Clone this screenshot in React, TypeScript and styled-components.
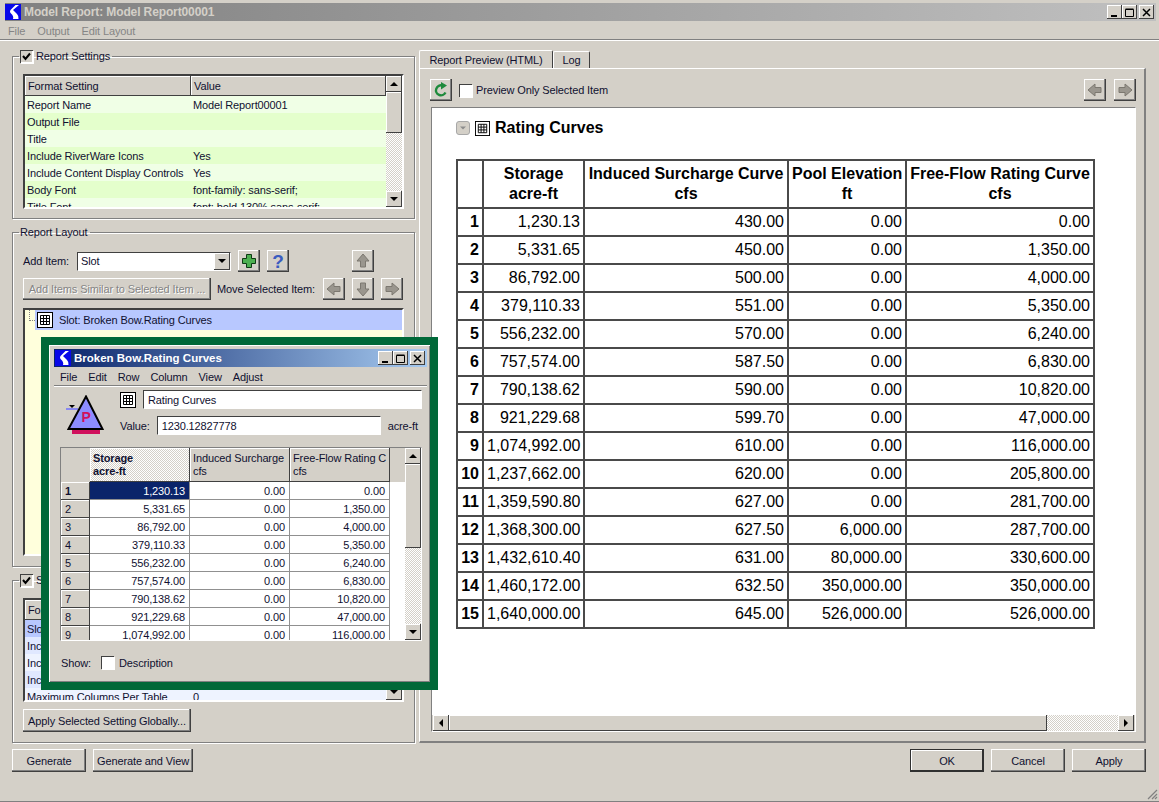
import styled, { createGlobalStyle } from "styled-components";

const FACE = "#d4d0c8";
const HATCH = `repeating-conic-gradient(#ffffff 0 25%, #d4d0c8 0 50%) 0 0 / 2px 2px`;

const GlobalStyle = createGlobalStyle`
  html, body { margin: 0; padding: 0; background: ${FACE}; }
  body { font-family: "Liberation Sans", Arial, sans-serif; font-size: 11px; letter-spacing: -0.12px; color: #101030; }
  * { box-sizing: border-box; }
`;

const settingRows = [
  ["Report Name", "Model Report00001"],
  ["Output File", ""],
  ["Title", ""],
  ["Include RiverWare Icons", "Yes"],
  ["Include Content Display Controls", "Yes"],
  ["Body Font", "font-family: sans-serif;"],
  ["Title Font", "font: bold 130% sans-serif;"],
];

const slotRows = [
  ["Slot Name", ""],
  ["Include Title", "Yes"],
  ["Include Units", "Yes"],
  ["Include Row Labels", "Yes"],
  ["Maximum Columns Per Table", "0"],
];

const previewRows = [
  ["1,230.13", "430.00", "0.00", "0.00"],
  ["5,331.65", "450.00", "0.00", "1,350.00"],
  ["86,792.00", "500.00", "0.00", "4,000.00"],
  ["379,110.33", "551.00", "0.00", "5,350.00"],
  ["556,232.00", "570.00", "0.00", "6,240.00"],
  ["757,574.00", "587.50", "0.00", "6,830.00"],
  ["790,138.62", "590.00", "0.00", "10,820.00"],
  ["921,229.68", "599.70", "0.00", "47,000.00"],
  ["1,074,992.00", "610.00", "0.00", "116,000.00"],
  ["1,237,662.00", "620.00", "0.00", "205,800.00"],
  ["1,359,590.80", "627.00", "0.00", "281,700.00"],
  ["1,368,300.00", "627.50", "6,000.00", "287,700.00"],
  ["1,432,610.40", "631.00", "80,000.00", "330,600.00"],
  ["1,460,172.00", "632.50", "350,000.00", "350,000.00"],
  ["1,640,000.00", "645.00", "526,000.00", "526,000.00"],
];

const slotValues = [
  ["1,230.13", "0.00", "0.00"],
  ["5,331.65", "0.00", "1,350.00"],
  ["86,792.00", "0.00", "4,000.00"],
  ["379,110.33", "0.00", "5,350.00"],
  ["556,232.00", "0.00", "6,240.00"],
  ["757,574.00", "0.00", "6,830.00"],
  ["790,138.62", "0.00", "10,820.00"],
  ["921,229.68", "0.00", "47,000.00"],
  ["1,074,992.00", "0.00", "116,000.00"],
];

const Logo = () => (
  <svg width="16" height="16" viewBox="0 0 16 16" style={{ flex: "none" }}>
    <rect width="16" height="16" fill="#0808e8" />
    <path d="M10.5 1 L14 1 L8 6 L12 10 Q14 12 13.5 15 L8 15 Q9 12 6 9.5 Q4 7.5 6 5.5 Z" fill="#ffffff" />
  </svg>
);

const GridIcon = ({ size = 16 }: { size?: number }) => (
  <svg width={size} height={size} viewBox="0 0 16 16" style={{ flex: "none" }}>
    <rect x="0.5" y="0.5" width="15" height="15" fill="#fff" stroke="#000" />
    <path d="M3.5 3.5H12.5V12.5H3.5ZM3.5 6.5H12.5M3.5 9.5H12.5M6.5 3.5V12.5M9.5 3.5V12.5" fill="none" stroke="#000" />
  </svg>
);

const arrowPaths = {
  up: "M8 1 L14 8 L10.5 8 L10.5 14 L5.5 14 L5.5 8 L2 8 Z",
  down: "M8 15 L14 8 L10.5 8 L10.5 2 L5.5 2 L5.5 8 L2 8 Z",
  left: "M1 8 L8 2 L8 5.5 L14 5.5 L14 10.5 L8 10.5 L8 14 Z",
  right: "M15 8 L8 2 L8 5.5 L2 5.5 L2 10.5 L8 10.5 L8 14 Z",
};

const Arrow = ({ dir }: { dir: keyof typeof arrowPaths }) => (
  <svg width="16" height="16" viewBox="0 0 16 16">
    <path d={arrowPaths[dir]} fill="#9a968e" stroke="#7c7870" />
  </svg>
);

const Caret = ({ dir, color = "#000" }: { dir: "up" | "down" | "left" | "right"; color?: string }) => {
  const pts = {
    up: "4,6 8,2 12,6",
    down: "4,2 8,6 12,2",
    left: "6,0 2,4 6,8",
    right: "2,0 6,4 2,8",
  }[dir];
  const side = dir === "left" || dir === "right";
  return (
    <svg width={side ? 8 : 16} height="8" viewBox={side ? "0 0 8 8" : "0 0 16 8"}>
      <polygon points={pts} fill={color} />
    </svg>
  );
};

const Reservoir = () => (
  <svg width="40" height="40" viewBox="0 0 40 40">
    <rect x="0" y="13" width="12" height="2" fill="#8888f0" />
    <polygon points="3,10 9,10 6,13" fill="#000" />
    <rect x="6" y="34" width="28" height="5" fill="#d0105c" />
    <polygon points="20,1.5 36.5,34 2.5,34" fill="#8c8cff" stroke="#000" strokeWidth="2" />
    <text x="20" y="27" textAnchor="middle" fontFamily="Liberation Sans, sans-serif" fontWeight="bold" fontSize="14" fill="#d0105c">P</text>
  </svg>
);

const MinIcon = () => (
  <svg width="9" height="9"><rect x="1" y="7" width="6" height="2" fill="#000" /></svg>
);

const MaxIcon = () => (
  <svg width="9" height="9"><path d="M0.5 1.5H8.5V8.5H0.5ZM0.5 1H8.5" fill="none" stroke="#000" /></svg>
);

const CloseIcon = () => (
  <svg width="9" height="9"><path d="M1 1L8 8M8 1L1 8" stroke="#000" strokeWidth="1.5" /></svg>
);

const TickIcon = () => (
  <svg width="9" height="9"><path d="M1 4L3.5 7L8 1.5" fill="none" stroke="#000" strokeWidth="2" /></svg>
);

const Page = styled.div`
  position: relative;
  width: 1159px;
  height: 802px;
  overflow: hidden;
  background: ${FACE};
  border-bottom: 1px solid #808080;
  padding-top: 3px;
  display: flex;
  flex-direction: column;
`;

const TitleBar = styled.div`
  height: 18px;
  margin: 0 3px 0 5px;
  display: flex;
  align-items: center;
  padding: 0 2px 0 0;
  background: linear-gradient(90deg, #808080, #c0c0c0);
`;

const TitleText = styled.div`
  flex: 1;
  margin-left: 3px;
  font-weight: bold;
  font-size: 12px;
  color: ${FACE};
`;

const Caption = styled.button<{ $gap?: number }>`
  width: 15px;
  height: 14px;
  padding: 0;
  margin-left: ${({ $gap }) => $gap || 0}px;
  display: flex;
  align-items: center;
  justify-content: center;
  background: ${FACE};
  border: none;
  box-shadow: inset -1px -1px #404040, inset 1px 1px #ffffff;
`;

const CaptionGroup = styled.div`
  display: flex;
`;

const Menu = styled.div<{ $dim?: boolean }>`
  height: 19px;
  padding-top: 1px;
  display: flex;
  align-items: center;
  gap: 12px;
  padding-left: 8px;
  color: ${({ $dim }) => ($dim ? "#858585" : "#101030")};
  border-bottom: 1px solid #808080;
  box-shadow: 0 1px #ffffff;
`;

const Main = styled.div`
  display: flex;
  gap: 4px;
  padding: 9px 0 0 12px;
`;

const LeftColumn = styled.div`
  width: 403px;
  display: flex;
  flex-direction: column;
  gap: 6px;
`;

const Group = styled.fieldset<{ $height: number }>`
  height: ${({ $height }) => $height}px;
  min-width: 0;
  margin: 0;
  padding: 11px 10px 0;
  border: 1px solid #808080;
  box-shadow: 1px 1px #ffffff, inset 1px 1px #ffffff;
`;

const Legend = styled.legend`
  height: 14px;
  margin-left: -4px;
  padding: 0 2px 0 1px;
  display: flex;
  align-items: center;
  gap: 3px;
`;

const Check = styled.span<{ $checked?: boolean; $ml?: number }>`
  width: 13px;
  height: 13px;
  flex: none;
  margin-left: ${({ $ml }) => $ml || 0}px;
  display: inline-flex;
  align-items: center;
  justify-content: center;
  background: ${({ $checked }) => ($checked ? FACE : "#ffffff")};
  box-shadow: inset 1px 1px #404040, inset -1px -1px #ffffff, 1px 1px #ffffff;
`;

const Sunken = styled.div<{ $height: number; $bg?: string }>`
  height: ${({ $height }) => $height}px;
  display: flex;
  overflow: hidden;
  background: ${({ $bg }) => $bg || FACE};
  border: 2px solid;
  border-color: #404040 #ffffff #ffffff #404040;
`;

const SheetBody = styled.div`
  flex: 1;
  min-width: 0;
  overflow: hidden;
`;

const SheetRow = styled.div<{ $bg?: string }>`
  height: 17px;
  display: flex;
  align-items: center;
  background: ${({ $bg }) => $bg || "transparent"};
  white-space: nowrap;
`;

const SheetHead = styled.div`
  height: 20px;
  display: flex;
`;

const HeadCell = styled.div<{ $width: number }>`
  width: ${({ $width }) => $width}px;
  display: flex;
  align-items: center;
  padding-left: 3px;
  background: ${FACE};
  box-shadow: inset -1px -1px #404040, inset 1px 1px #ffffff;
`;

const NameCell = styled.div`
  width: 168px;
  flex: none;
  padding-left: 2px;
`;

const VTrack = styled.div`
  width: 16px;
  flex: none;
  display: flex;
  flex-direction: column;
`;

const ScrollBtn = styled.div`
  flex: none;
  width: 16px;
  height: 16px;
  display: flex;
  align-items: center;
  justify-content: center;
  background: ${FACE};
  box-shadow: inset -1px -1px #404040, inset 1px 1px #ffffff;
`;

const Thumb = styled.div<{ $size: number }>`
  flex: 0 0 ${({ $size }) => $size}px;
  background: ${FACE};
  box-shadow: inset -1px -1px #404040, inset 1px 1px #ffffff;
`;

const Hatch = styled.div`
  flex: 1;
  background: ${HATCH};
`;

const VScroll = ({ thumb }: { thumb: number }) => (
  <VTrack>
    <ScrollBtn><Caret dir="up" /></ScrollBtn>
    <Thumb $size={thumb} />
    <Hatch />
    <ScrollBtn><Caret dir="down" /></ScrollBtn>
  </VTrack>
);

const Row = styled.div<{ $mt?: number }>`
  display: flex;
  align-items: center;
  margin-top: ${({ $mt }) => $mt || 0}px;
`;

const Label = styled.span<{ $width?: number; $ml?: number }>`
  ${({ $width }) => ($width ? `width: ${$width}px;` : "")}
  ${({ $ml }) => ($ml ? `margin-left: ${$ml}px;` : "")}
  flex: none;
  white-space: nowrap;
`;

const Combo = styled.div`
  width: 154px;
  height: 19px;
  display: flex;
  align-items: center;
  padding-left: 3px;
  background: #ffffff;
  border: 1px solid;
  border-color: #404040 #ffffff #ffffff #404040;
  position: relative;
`;

const ComboArrow = styled(ScrollBtn)`
  position: absolute;
  right: 0;
  top: 0;
  height: 17px;
`;

const Button = styled.button<{ $width?: number; $height?: number; $ml?: number; $dim?: boolean; $default?: boolean }>`
  width: ${({ $width }) => ($width ? `${$width}px` : "22px")};
  height: ${({ $height }) => $height || 22}px;
  margin-left: ${({ $ml }) => $ml || 0}px;
  flex: none;
  padding: 0;
  display: flex;
  align-items: center;
  justify-content: center;
  font: inherit;
  letter-spacing: inherit;
  white-space: nowrap;
  color: ${({ $dim }) => ($dim ? "#858585" : "#101030")};
  ${({ $dim }) => ($dim ? "text-shadow: 1px 1px #ffffff;" : "")}
  background: ${FACE};
  border: none;
  box-shadow: ${({ $default }) =>
    $default
      ? "inset -2px -2px #303030, inset 1px 1px #303030, inset 2px 2px #ffffff"
      : "inset -1px -1px #404040, inset -2px -2px #808080, inset 1px 1px #ffffff"};
`;

const HelpMark = styled.span`
  font-size: 19px;
  font-weight: bold;
  line-height: 1;
  color: #3a5cc0;
`;

const TreeBox = styled(Sunken)`
  display: block;
  position: relative;
  margin-top: 8px;
`;

const TreeDots = styled.div`
  position: absolute;
  left: 4px;
  top: 0;
  width: 6px;
  height: 11px;
  border-left: 1px dotted #808080;
  border-bottom: 1px dotted #808080;
`;

const TreeItem = styled.div`
  height: 20px;
  margin-left: 10px;
  padding-left: 2px;
  display: flex;
  align-items: center;
  gap: 6px;
  background: #b8c8ff;
`;

const Footer = styled.div`
  display: flex;
  justify-content: space-between;
  padding: 6px 13px 0 12px;
`;

const FooterGroup = styled.div`
  display: flex;
  gap: 7px;
`;

const RightColumn = styled.div`
  width: 727px;
  display: flex;
  flex-direction: column;
  padding-top: 1px;
`;

const Tabs = styled.div`
  height: 18px;
  display: flex;
  align-items: flex-end;
`;

const Tab = styled.div<{ $width: number; $active?: boolean }>`
  width: ${({ $width }) => $width}px;
  height: ${({ $active }) => ($active ? 18 : 17)}px;
  display: flex;
  align-items: center;
  justify-content: center;
  background: ${FACE};
  border-top: 1px solid #ffffff;
  border-left: 1px solid #ffffff;
  border-right: 1px solid #404040;
  border-radius: 2px 2px 0 0;
`;

const Pane = styled.div`
  height: 675px;
  padding: 10px 8px 0 10px;
  border-top: 1px solid #ffffff;
  border-left: 1px solid #ffffff;
  border-right: 2px solid #808080;
  border-bottom: 2px solid #808080;
`;

const Toolbar = styled.div`
  height: 22px;
  display: flex;
  align-items: center;
`;

const ToolLabel = styled(Label)`
  flex: 1;
  margin-left: 4px;
`;

const Browser = styled.div`
  height: 625px;
  margin: 6px 0 0 1px;
  display: flex;
  flex-direction: column;
  border: 1px solid #808080;
  border-right-color: #ffffff;
  border-bottom-color: #ffffff;
`;

const Doc = styled.div`
  flex: 1;
  background: #ffffff;
  padding: 12px 0 0 24px;
  overflow: hidden;
  color: #000000;
  letter-spacing: 0;
`;

const DocTitle = styled.div`
  display: flex;
  align-items: center;
  height: 16px;
  font-weight: bold;
  font-size: 16px;
  gap: 5px;
`;

const Toggle = styled.span`
  width: 14px;
  height: 14px;
  display: flex;
  align-items: center;
  justify-content: center;
  background: ${FACE};
  border: 1px solid #a8a8a8;
  border-radius: 3px;
`;

const PreviewTable = styled.table`
  margin-top: 23px;
  width: 638px;
  table-layout: fixed;
  border-collapse: collapse;
  font-size: 16px;
  th, td { border: 2px solid #4a4a4a; padding: 0 3px; }
  th { height: 48px; line-height: 20px; font-weight: bold; white-space: nowrap; overflow: hidden; }
  td { height: 28px; text-align: right; }
  td:first-child { font-weight: bold; }
`;

const HScroll = styled.div`
  height: 17px;
  flex: none;
  display: flex;
  padding: 0 1px;
  background: ${FACE};
  border-top: 1px solid #ffffff;
`;

const HThumb = styled.div`
  width: 598px;
  background: ${FACE};
  box-shadow: inset -1px -1px #404040, inset 1px 1px #ffffff;
`;

const Grip = styled.svg`
  position: absolute;
  right: 1px;
  bottom: 1px;
`;

const Frame = styled.div`
  position: absolute;
  left: 41px;
  top: 337px;
  width: 397px;
  height: 353px;
  border: 8px solid #006838;
`;

const SubWindow = styled.div`
  height: 100%;
  display: flex;
  flex-direction: column;
  padding: 4px 3px 0 5px;
  background: ${FACE};
  box-shadow: inset 1px 1px #ffffff, inset -1px -1px #808080;
`;

const SubTitle = styled.div`
  height: 18px;
  flex: none;
  display: flex;
  align-items: center;
  padding: 0 2px 0 1px;
  background: linear-gradient(90deg, #0a246a, #a6caf0);
  color: #ffffff;
  font-weight: bold;
  font-size: 11.5px;
  letter-spacing: 0;
`;

const SubTitleText = styled.div`
  flex: 1;
  margin-left: 3px;
`;

const SubMenu = styled(Menu)`
  flex: none;
  gap: 11px;
  padding-left: 6px;
`;

const Identity = styled.div`
  height: 60px;
  flex: none;
  display: grid;
  grid-template-columns: 66px 1fr;
`;

const IconWell = styled.div`
  padding: 9px 0 0 12px;
`;

const IdentityFields = styled.div`
  padding-top: 4px;
  display: flex;
  flex-direction: column;
  gap: 7px;
`;

const NameField = styled.div`
  display: flex;
  align-items: center;
  gap: 7px;
  padding-right: 5px;
`;

const TextBox = styled.div<{ $width?: number }>`
  ${({ $width }) => ($width ? `width: ${$width}px;` : "flex: 1;")}
  height: 19px;
  display: flex;
  align-items: center;
  padding-left: 4px;
  background: #ffffff;
  border: 1px solid;
  border-color: #404040 #ffffff #ffffff #404040;
`;

const ValueField = styled.div`
  display: flex;
  align-items: center;
  gap: 7px;
`;

const SlotFrame = styled.div`
  height: 194px;
  flex: none;
  margin: 1px 5px 0 6px;
  display: flex;
  overflow: hidden;
  background: ${FACE};
  border: 1px solid;
  border-color: #808080 #ffffff #ffffff #808080;
`;

const SlotTableWrap = styled.div`
  flex: 1;
  overflow: hidden;
`;

const SlotTable = styled.table`
  width: 345px;
  table-layout: fixed;
  border-collapse: separate;
  border-spacing: 0;
  th {
    height: 34px;
    padding: 0 3px;
    font-weight: normal;
    text-align: left;
    line-height: 13px;
    white-space: nowrap;
    overflow: hidden;
    background: ${FACE};
    box-shadow: inset -1px -1px #404040, inset 1px 1px #ffffff;
  }
  th:first-child { box-shadow: none; }
  td {
    height: 18px;
    padding: 0 4px;
    text-align: right;
    background: #ffffff;
    border-right: 1px solid #909090;
    border-bottom: 1px solid #909090;
  }
  td:first-child {
    text-align: left;
    background: ${FACE};
    border: none;
    box-shadow: inset -1px -1px #404040, inset 1px 1px #ffffff;
  }
  td:last-child { background: #ffffff; border: none; }
  th:last-child { background: ${FACE}; box-shadow: none; }
`;

const HatchHead = styled.th`
  && {
    font-weight: bold;
    background: ${HATCH};
  }
`;

const ActiveRowHead = styled.td`
  && {
    font-weight: bold;
    background: ${HATCH};
  }
`;

const SelectedCell = styled.td`
  && {
    background: #0a246a;
    color: #ffffff;
  }
`;

const ShowRow = styled.div`
  display: flex;
  align-items: center;
  flex: 1;
  padding: 2px 0 0 7px;
`;

export default function App() {
  return (
    <Page>
      <GlobalStyle />
      <TitleBar>
        <Logo />
        <TitleText>Model Report: Model Report00001</TitleText>
        <CaptionGroup>
          <Caption><MinIcon /></Caption>
          <Caption><MaxIcon /></Caption>
          <Caption $gap={2}><CloseIcon /></Caption>
        </CaptionGroup>
      </TitleBar>
      <Menu $dim>
        <span>File</span>
        <span>Output</span>
        <span>Edit Layout</span>
      </Menu>

      <Main>
        <LeftColumn>
          <Group $height={170}>
            <Legend>
              <Check $checked><TickIcon /></Check>
              Report Settings
            </Legend>
            <Sunken $height={135}>
              <SheetBody>
                <SheetHead>
                  <HeadCell $width={166}>Format Setting</HeadCell>
                  <HeadCell $width={195}>Value</HeadCell>
                </SheetHead>
                {settingRows.map((r, i) => (
                  <SheetRow key={r[0]} $bg={i % 2 ? "#e4ffcc" : "#f0ffe6"}>
                    <NameCell>{r[0]}</NameCell>
                    <span>{r[1]}</span>
                  </SheetRow>
                ))}
              </SheetBody>
              <VScroll thumb={41} />
            </Sunken>
          </Group>

          <Group $height={342}>
            <Legend>Report Layout</Legend>
            <Row>
              <Label $width={54}>Add Item:</Label>
              <Combo>
                Slot
                <ComboArrow><Caret dir="down" /></ComboArrow>
              </Combo>
              <Button $ml={7}>
                <svg width="16" height="16" viewBox="0 0 16 16">
                  <path d="M5.5 1.5H10.5V5.5H14.5V10.5H10.5V14.5H5.5V10.5H1.5V5.5H5.5Z" fill="#4caf50" stroke="#0c3c14" />
                </svg>
              </Button>
              <Button $ml={7}><HelpMark>?</HelpMark></Button>
              <Button $ml={63}><Arrow dir="up" /></Button>
            </Row>
            <Row $mt={6}>
              <Button $width={188} $dim>Add Items Similar to Selected Item ...</Button>
              <Label $width={106} $ml={6}>Move Selected Item:</Label>
              <Button><Arrow dir="left" /></Button>
              <Button $ml={7}><Arrow dir="down" /></Button>
              <Button $ml={7}><Arrow dir="right" /></Button>
            </Row>
            <TreeBox $height={248} $bg="#ffffdc">
              <TreeDots />
              <TreeItem>
                <GridIcon />
                Slot: Broken Bow.Rating Curves
              </TreeItem>
            </TreeBox>
          </Group>

          <Group $height={170}>
            <Legend>
              <Check $checked><TickIcon /></Check>
              Slot Settings
            </Legend>
            <Sunken $height={104} $bg="#e8f0ff">
              <SheetBody>
                <SheetHead>
                  <HeadCell $width={166}>Format Setting</HeadCell>
                  <HeadCell $width={195}>Value</HeadCell>
                </SheetHead>
                {slotRows.map((r, i) => (
                  <SheetRow key={r[0]} $bg={i === 0 ? "#b8c8ff" : i % 2 ? "#e0e8ff" : "#eef3ff"}>
                    <NameCell>{r[0]}</NameCell>
                    <span>{r[1]}</span>
                  </SheetRow>
                ))}
              </SheetBody>
              <VScroll thumb={40} />
            </Sunken>
            <Row $mt={7}>
              <Button $width={168} $height={23}>Apply Selected Setting Globally...</Button>
            </Row>
          </Group>
        </LeftColumn>

        <RightColumn>
          <Tabs>
            <Tab $width={134} $active>Report Preview (HTML)</Tab>
            <Tab $width={37}>Log</Tab>
          </Tabs>
          <Pane>
            <Toolbar>
              <Button>
                <svg width="16" height="16" viewBox="0 0 16 16">
                  <path d="M12.5 10.5A5 5 0 1 1 9.5 3.5" fill="none" stroke="#1e8a3c" strokeWidth="2.4" />
                  <polygon points="8,0 14,3.5 8,7.5" fill="#1e8a3c" />
                </svg>
              </Button>
              <Check $ml={7} />
              <ToolLabel>Preview Only Selected Item</ToolLabel>
              <Button><Arrow dir="left" /></Button>
              <Button $ml={8}><Arrow dir="right" /></Button>
            </Toolbar>
            <Browser>
              <Doc>
                <DocTitle>
                  <Toggle><Caret dir="down" color="#8c8c8c" /></Toggle>
                  <GridIcon size={15} />
                  Rating Curves
                </DocTitle>
                <PreviewTable>
                  <colgroup>
                    <col width="26" />
                    <col width="101" />
                    <col width="204" />
                    <col width="118" />
                    <col width="188" />
                  </colgroup>
                  <thead>
                    <tr>
                      <th />
                      <th>Storage<br />acre-ft</th>
                      <th>Induced Surcharge Curve<br />cfs</th>
                      <th>Pool Elevation<br />ft</th>
                      <th>Free-Flow Rating Curve<br />cfs</th>
                    </tr>
                  </thead>
                  <tbody>
                    {previewRows.map((r, i) => (
                      <tr key={i}>
                        <td>{i + 1}</td>
                        {r.map((v, j) => <td key={j}>{v}</td>)}
                      </tr>
                    ))}
                  </tbody>
                </PreviewTable>
              </Doc>
              <HScroll>
                <ScrollBtn><Caret dir="left" /></ScrollBtn>
                <HThumb />
                <Hatch />
                <ScrollBtn><Caret dir="right" /></ScrollBtn>
              </HScroll>
            </Browser>
          </Pane>
        </RightColumn>
      </Main>

      <Footer>
        <FooterGroup>
          <Button $width={74} $height={23}>Generate</Button>
          <Button $width={100} $height={23}>Generate and View</Button>
        </FooterGroup>
        <FooterGroup>
          <Button $width={74} $height={23} $default>OK</Button>
          <Button $width={74} $height={23}>Cancel</Button>
          <Button $width={74} $height={23}>Apply</Button>
        </FooterGroup>
      </Footer>

      <Grip width="12" height="12" viewBox="0 0 12 12">
        <path d="M11 2L2 11M11 6L6 11M11 9L9 11" stroke="#808080" strokeWidth="1.2" />
      </Grip>

      <Frame>
        <SubWindow>
          <SubTitle>
            <Logo />
            <SubTitleText>Broken Bow.Rating Curves</SubTitleText>
            <CaptionGroup>
              <Caption><MinIcon /></Caption>
              <Caption><MaxIcon /></Caption>
              <Caption $gap={2}><CloseIcon /></Caption>
            </CaptionGroup>
          </SubTitle>
          <SubMenu>
            <span>File</span>
            <span>Edit</span>
            <span>Row</span>
            <span>Column</span>
            <span>View</span>
            <span>Adjust</span>
          </SubMenu>
          <Identity>
            <IconWell><Reservoir /></IconWell>
            <IdentityFields>
              <NameField>
                <GridIcon />
                <TextBox>Rating Curves</TextBox>
              </NameField>
              <ValueField>
                <span>Value:</span>
                <TextBox $width={224}>1230.12827778</TextBox>
                <span>acre-ft</span>
              </ValueField>
            </IdentityFields>
          </Identity>
          <SlotFrame>
            <SlotTableWrap>
              <SlotTable>
                <colgroup>
                  <col width="29" />
                  <col width="100" />
                  <col width="100" />
                  <col width="100" />
                  <col width="16" />
                </colgroup>
                <thead>
                  <tr>
                    <th />
                    <HatchHead>Storage<br />acre-ft</HatchHead>
                    <th>Induced Surcharge<br />cfs</th>
                    <th>Free-Flow Rating C<br />cfs</th>
                    <th />
                  </tr>
                </thead>
                <tbody>
                  {slotValues.map((r, i) => (
                    <tr key={i}>
                      {i === 0 ? <ActiveRowHead>{i + 1}</ActiveRowHead> : <td>{i + 1}</td>}
                      {i === 0 ? <SelectedCell>{r[0]}</SelectedCell> : <td>{r[0]}</td>}
                      <td>{r[1]}</td>
                      <td>{r[2]}</td>
                      <td />
                    </tr>
                  ))}
                </tbody>
              </SlotTable>
            </SlotTableWrap>
            <VScroll thumb={84} />
          </SlotFrame>
          <ShowRow>
            <Label $width={40}>Show:</Label>
            <Check />
            <Label $ml={5}>Description</Label>
          </ShowRow>
        </SubWindow>
      </Frame>
    </Page>
  );
}
